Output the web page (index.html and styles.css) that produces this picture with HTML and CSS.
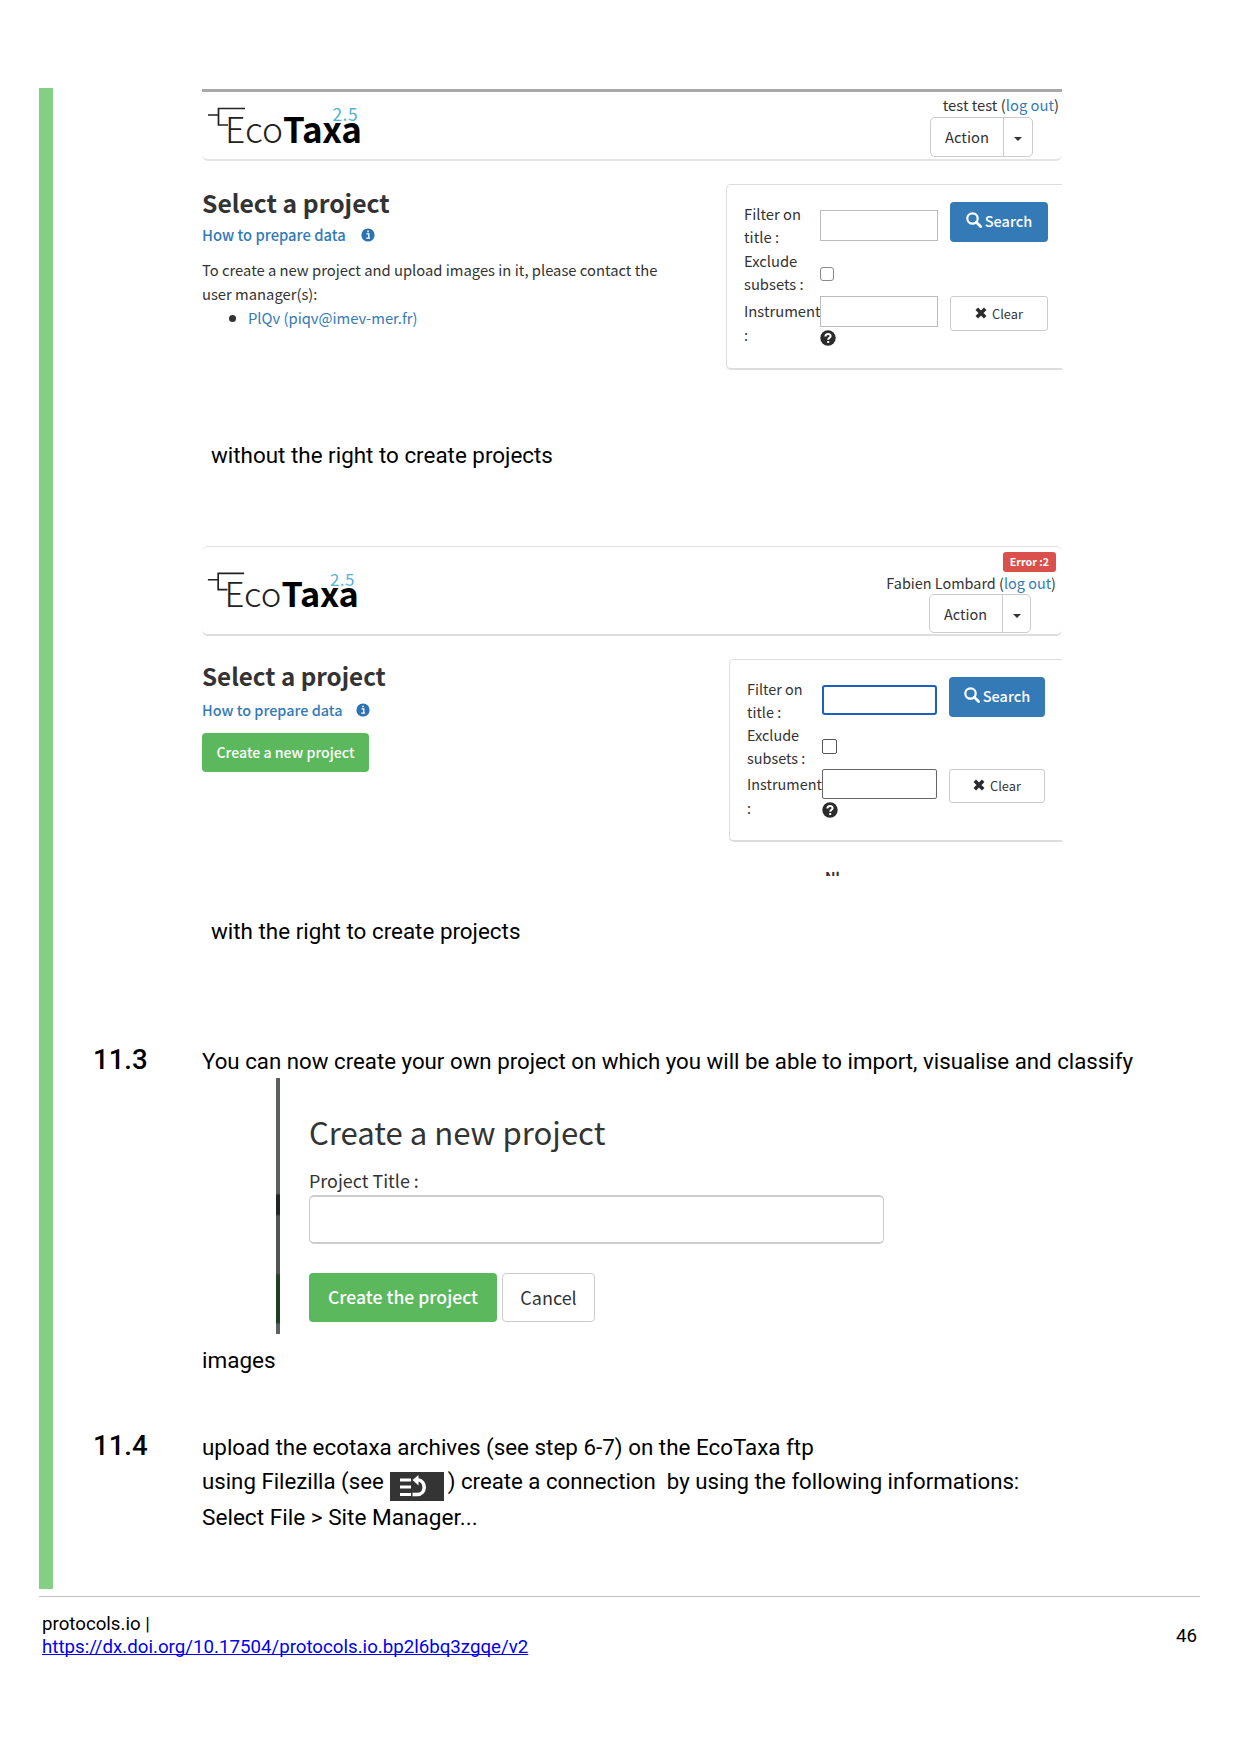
FILE: index.html
```html
<!DOCTYPE html>
<html lang="en">
<head>
<meta charset="utf-8">
<title>protocols.io</title>
<link rel="stylesheet" href="styles.css">
</head>
<body>
<svg class="defs" aria-hidden="true">
  <symbol id="info" viewBox="0 0 14 14">
    <circle cx="7" cy="7" r="6.600" fill="#2c73b5"/>
    <path d="M5.500 5.800h2.300v4M5.200 10.200h3.800M6.200 3.500h1.700" fill="none" stroke="#fff" stroke-width="1.300"/>
  </symbol>
  <symbol id="help" viewBox="0 0 16 16">
    <circle cx="8" cy="8" r="7.700" fill="#2b2b2b"/>
    <path d="M5.400 6.500C5.400 3 10.700 3.200 10.600 6.200 10.500 7.800 8.200 7.800 8.200 9.800M8.200 11v2" fill="none" stroke="#fff" stroke-width="2"/>
  </symbol>
  <symbol id="search" viewBox="0 0 16 16">
    <circle cx="6.500" cy="6.500" r="5.200" fill="none" stroke="#fff" stroke-width="2.200"/>
    <path d="M10.300 10.300l4.300 4.300" stroke="#fff" stroke-width="2.800" stroke-linecap="round"/>
  </symbol>
  <symbol id="cross" viewBox="0 0 12 12">
    <path d="M1.800 1.800l8.400 8.400M10.200 1.800L1.800 10.200" stroke="#2b2b2b" stroke-width="3.600"/>
  </symbol>
</svg>

<main class="protocol">
  <section class="step">
    <div class="step-number"></div>
    <div class="step-body">
      <div class="shot shot-user">
        <header class="navbar">
          <svg class="logo" viewBox="0 0 170 56">
            <path d="M6 15h10M43 8.500H16.500V25H26" fill="none" stroke="#222" stroke-width="1.700"/>
            <text x="130.500" y="21" class="logo-version" textLength="25">2.5</text>
            <text x="23" y="42.500" class="logo-eco" textLength="58" lengthAdjust="spacingAndGlyphs">Eco</text>
            <text x="81" y="42.500" class="logo-taxa" textLength="79">Taxa</text>
          </svg>
          <div class="account">
            <div class="user">test test (<a>log out</a>)</div>
            <div class="action"><span class="action-label">Action</span><span class="action-toggle"><i class="caret"></i></span></div>
          </div>
        </header>
        <div class="panes">
          <div class="intro">
            <h2>Select a project</h2>
            <div class="howto"><a>How to prepare data</a><svg><use href="#info"/></svg></div>
            <p>To create a new project and upload images in it, please contact the<br>user manager(s):</p>
            <ul><li><a>PlQv (piqv@imev-mer.fr)</a></li></ul>
          </div>
          <div class="side">
            <div class="well">
              <label>Filter on<br>title :</label>
              <span class="field field-title"></span>
              <span class="btn btn-search"><svg><use href="#search"/></svg>Search</span>
              <label>Exclude<br>subsets :</label>
              <span class="check"></span>
              <span></span>
              <label class="instrument">Instrument<br>:</label>
              <div><span class="field"></span><svg class="help"><use href="#help"/></svg></div>
              <span class="btn btn-clear"><svg><use href="#cross"/></svg>Clear</span>
            </div>
          </div>
        </div>
      </div>
      <p class="caption">without the right to create projects</p>

      <div class="shot shot-manager">
        <header class="navbar">
          <svg class="logo" viewBox="0 0 170 56">
            <path d="M6 15h10M43 8.500H16.500V25H26" fill="none" stroke="#222" stroke-width="1.700"/>
            <text x="130.500" y="21" class="logo-version" textLength="25">2.5</text>
            <text x="23" y="42.500" class="logo-eco" textLength="58" lengthAdjust="spacingAndGlyphs">Eco</text>
            <text x="81" y="42.500" class="logo-taxa" textLength="79">Taxa</text>
          </svg>
          <div class="account">
            <span class="badge">Error :2</span>
            <div class="user">Fabien Lombard (<a>log out</a>)</div>
            <div class="action"><span class="action-label">Action</span><span class="action-toggle"><i class="caret"></i></span></div>
          </div>
        </header>
        <div class="panes">
          <div class="intro">
            <h2>Select a project</h2>
            <div class="howto"><a>How to prepare data</a><svg><use href="#info"/></svg></div>
            <span class="btn btn-create">Create a new project</span>
          </div>
          <div class="side">
            <div class="well">
              <label>Filter on<br>title :</label>
              <span class="field field-title"></span>
              <span class="btn btn-search"><svg><use href="#search"/></svg>Search</span>
              <label>Exclude<br>subsets :</label>
              <span class="check"></span>
              <span></span>
              <label class="instrument">Instrument<br>:</label>
              <div><span class="field"></span><svg class="help"><use href="#help"/></svg></div>
              <span class="btn btn-clear"><svg><use href="#cross"/></svg>Clear</span>
            </div>
            <div class="cut">Nl</div>
          </div>
        </div>
      </div>
      <p class="caption">with the right to create projects</p>
    </div>
  </section>

  <section class="step step-create">
    <div class="step-number">11.3</div>
    <div class="step-body">
      <p>You can now create your own project on which you will be able to import, visualise and classify</p>
      <div class="dialog">
        <h3>Create a new project</h3>
        <label>Project Title :</label>
        <span class="title-field"></span>
        <div class="dialog-buttons">
          <span class="btn btn-create">Create the project</span>
          <span class="btn btn-cancel">Cancel</span>
        </div>
      </div>
      <p class="images">images</p>
    </div>
  </section>

  <section class="step step-upload">
    <div class="step-number">11.4</div>
    <div class="step-body">
      <p>upload the ecotaxa archives (see step 6-7) on the EcoTaxa ftp</p>
      <p class="with-icon"><span>using Filezilla (see</span>
        <svg class="tool" viewBox="0 0 54 29"><rect width="54" height="29" fill="#343434"/><path d="M10 8h11M10 15h11M10 22.500h11" stroke="#fff" stroke-width="3.200"/><path d="M22.500 22.500h4.500C36.500 22.500 36.500 8.500 27.500 7.800" fill="none" stroke="#fff" stroke-width="3.600"/><path d="M22.500 8L28.500 3v10.500z" fill="#fff"/></svg>
        <span class="after">) create a connection&nbsp; by using the following informations:</span></p>
      <p class="last">Select File &gt; Site Manager...</p>
    </div>
  </section>
</main>

<footer class="footer">
  <div>protocols.io |<br><a href="https://dx.doi.org/10.17504/protocols.io.bp2l6bq3zgqe/v2">https://dx.doi.org/10.17504/protocols.io.bp2l6bq3zgqe/v2</a></div>
  <div class="page-number">46</div>
</footer>
</body>
</html>
```
FILE: styles.css
```css
* { box-sizing: border-box; }
body {
  margin: 0;
  width: 1240px;
  height: 1755px;
  padding: 89px 40px 0 39px;
  background: #fff;
  color: #000;
  font: 22.270px/30px Roboto, sans-serif;
}
p, h2, h3, ul { margin: 0; padding: 0; font-weight: 400; }
p { white-space: nowrap; }
.defs { position: absolute; width: 0; height: 0; }

.protocol { height: 1501px; border-left: 14px solid #85cf85; }
.step { display: grid; grid-template-columns: 149px 1fr; padding-top: 1px; margin-top: -1px; }
.step-number { padding-left: 40px; font-size: 27.600px; font-weight: 500; margin-top: -1px; }

.step-create { margin-top: 98.500px; }
.step-upload { margin-top: 54px; font-size: 22.400px; }
.step-upload p { height: 34px; line-height: 34px; }
.step-upload .last { height: 38px; line-height: 38px; font-size: 22.600px; }
.step-upload .step-number { margin-top: 0; line-height: 32px; }
.step-upload .with-icon { display: flex; align-items: flex-start; height: 35px; font-size: 22.230px; }
.tool { width: 54px; height: 29px; margin: 8px 4px 0 6px; flex: none; }
.images { font-size: 22.500px; }
.caption { padding-left: 9px; font-size: 22.420px; }

/* EcoTaxa project pages */
.shot {
  --lh: 23.600px;
  width: 860px;
  overflow: hidden;
  color: #333;
  font: 14.780px/24px "Noto Sans CJK JP", sans-serif;
}
.shot a { color: #337ab7; }
.shot-user { height: 291px; margin-bottom: 60px; border-top: 3px solid #a9a9a9; }
.shot-manager { --lh: 23.100px; height: 330px; margin: 76px 0 40px; font-size: 14.450px; }

.navbar { display: flex; justify-content: space-between; height: 69px; border-bottom: 2px solid #e4e4e4; border-radius: 0 0 6px 6px; }
.shot-manager .navbar { height: 90px; border: solid #dedede; border-width: 1px 0 2px; border-radius: 6px; }
.logo { width: 170px; height: 56px; margin-top: 8px; }
.shot-manager .logo { width: 166.600px; height: 55px; margin-top: 18px; }
.logo-eco { font: 300 35px "Noto Sans CJK JP", sans-serif; fill: #222; }
.logo-taxa { font: 700 35px "Noto Sans CJK JP", sans-serif; fill: #000; }
.logo-version { font: 400 17.300px "Noto Sans CJK JP", sans-serif; fill: #53b3cf; }

.account { display: flex; flex-direction: column; align-items: flex-end; padding: 1px 3px 0 0; }
.shot-manager .account { padding: 5px 6px 0 0; }
.shot-manager .user { line-height: 22px; }
.badge { height: 20px; padding: 0 7px; border-radius: 3px; background: #d9504c; color: #fff; font-size: 10.700px; font-weight: 700; line-height: 19px; }
.action { display: flex; height: 40px; width: 103px; margin-right: 26px; border: 1px solid #ccc; border-radius: 5px; background: #fff; line-height: 37px; }
.shot-manager .action { height: 39px; width: 102px; margin-right: 25px; line-height: 37px; }
.action-label { width: 73px; padding-left: 14px; border-right: 1px solid #ccc; }
.action-toggle { display: flex; flex: 1; align-items: center; justify-content: center; padding-top: 4px; }
.caret { border: solid transparent; border-width: 4px 4px 0; border-top-color: #333; }

.panes { display: flex; }
.intro { width: 524px; padding-top: 23px; }
.shot-manager .intro { width: 527px; padding-top: 22px; }
.intro h2 { font-size: 24.700px; font-weight: 700; line-height: 36px; }
.shot-manager h2 { font-size: 24.200px; }
.howto { display: flex; align-items: center; gap: 15px; height: 29px; font-weight: 500; }
.shot-manager .howto { height: 31px; gap: 13px; }
.howto svg { width: 14px; height: 14px; }
.intro p { margin-top: 8.600px; }
.intro ul { padding-left: 46px; list-style: none; }
.intro li::before { content: ""; float: left; width: 7px; height: 7px; margin: 9px 0 0 -19px; border-radius: 50%; background: #333; }

.btn { display: flex; align-items: center; justify-content: center; border-radius: 4px; }
.btn-create { background: #5cb85c; color: #fff; font-weight: 500; }
.intro .btn-create { width: 167px; height: 39px; margin-top: 8px; padding-bottom: 1px; font-size: 14.150px; }

.side { flex: 1; padding-top: 23px; }
.well {
  display: grid;
  grid-template-columns: 76px 118px 98px;
  grid-template-rows: 47.200px 47.200px auto;
  height: 186px;
  padding: 16.500px 0 0 17px;
  border: 1px solid #ddd;
  border-width: 1px 0 2px 1px;
  border-radius: 5px 0 0 5px;
  line-height: var(--lh);
  align-items: start;
}
.well > .btn { margin-left: 12px; width: 98px; }
.shot-manager .well { grid-template-columns: 75px 115px 96px; grid-template-rows: 46.200px 46.200px auto; height: 183px; }
.shot-manager .well > .btn { width: 96px; }
.instrument { margin-top: 3.600px; }
.field { display: block; height: 31px; border: 1px solid #bbb; background: #fff; }
.field-title { margin-top: 8px; }
.shot-manager .field { height: 30px; border-color: #666; border-radius: 2px; }
.shot-manager .field-title { border: 2px solid #1b5fc0; border-radius: 3px; }
.check { width: 14px; height: 14px; margin-top: 18px; border: 1px solid #888; border-radius: 3px; }
.shot-manager .check { width: 15px; height: 15px; margin-top: 16px; border-color: #555; border-radius: 2px; }
.help { display: block; width: 16px; height: 16px; margin-top: 3px; }
.btn-search { height: 40px; gap: 3px; background: #337ab7; color: #fff; font-size: 14.500px; font-weight: 500; padding-bottom: 1px; }
.btn-search svg { width: 16px; height: 16px; margin-bottom: 2px; }
.btn-clear { height: 35px; gap: 5px; border: 1px solid #ccc; border-radius: 3px; font-size: 12.800px; }
.btn-clear svg { width: 12px; height: 12px; margin-bottom: 1px; }
.shot-manager .btn-clear { height: 34px; }
.cut { padding-left: 96px; margin-top: 23px; font-weight: 700; font-size: 14px; }

/* project creation dialog */
.dialog {
  height: 256px;
  width: 700px;
  margin: 2px 0 11px 74px;
  padding: 36px 0 0 29px;
  border-left: 4px solid;
  border-image: linear-gradient(#5a5f60 0 45%, #1f2424 46% 53%, #505555 54% 76%, #1e4023 77% 95%, #5d6361 96%) 1;
  color: #333;
  font: 17.900px/24px "Noto Sans CJK JP", sans-serif;
}
.dialog h3 { font-size: 31.100px; line-height: 36px; }
.dialog label { display: block; margin-top: 18px; }
.title-field { display: block; width: 575px; height: 49px; margin-top: 3.500px; border: 2px solid #ccc; border-width: 2px 1px; border-radius: 5px; }
.dialog-buttons { display: flex; gap: 5px; margin-top: 28.500px; }
.dialog .btn-create { width: 188px; height: 49px; font-size: 17.600px; }
.btn-cancel { width: 93px; height: 49px; border: 1px solid #ccc; font-size: 18px; }

.footer {
  display: flex;
  justify-content: space-between;
  align-items: center;
  margin-top: 7px;
  padding: 16px 3px 0;
  border-top: 1px solid #c0c0c0;
  font-size: 18.700px;
  line-height: 23px;
}
.footer a { color: #0000ee; text-decoration-skip-ink: none; }
```
